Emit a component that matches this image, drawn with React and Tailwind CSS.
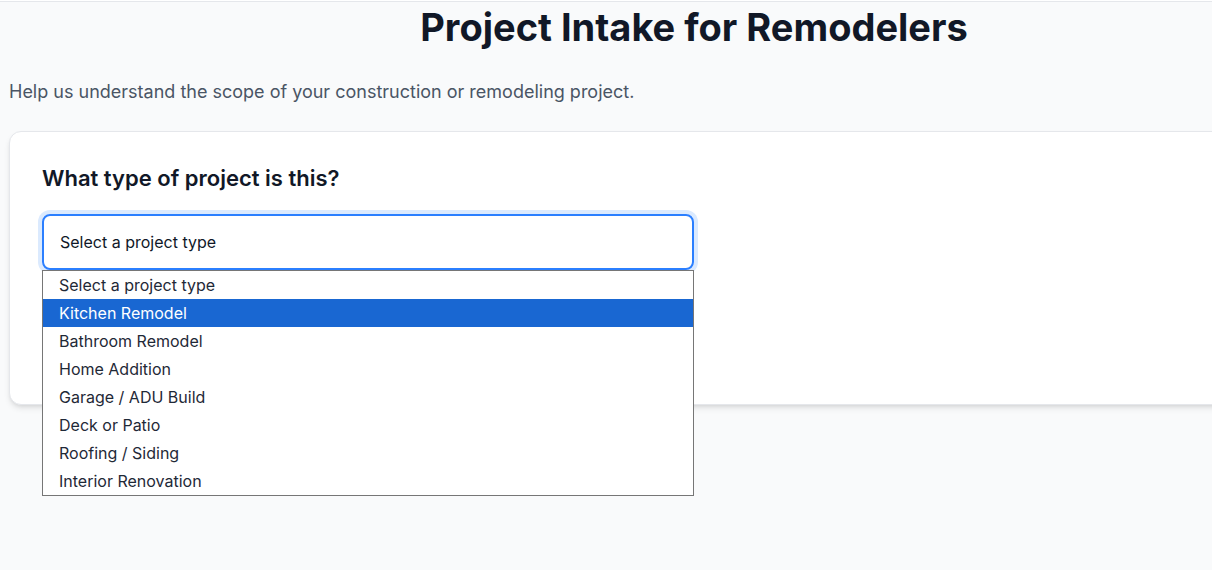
import { useState } from "react";

const projectTypes = [
	"Select a project type",
	"Kitchen Remodel",
	"Bathroom Remodel",
	"Home Addition",
	"Garage / ADU Build",
	"Deck or Patio",
	"Roofing / Siding",
	"Interior Renovation",
];

const App = () => {
	const [highlighted, setHighlighted] = useState(1);

	return (
		<div
			className="w-screen h-screen overflow-hidden bg-[#f9fafb] text-gray-900"
			style={{ fontFamily: "Inter, 'Noto Sans', sans-serif" }}
		>
			<div className="h-[2px] bg-white border-b border-gray-200"></div>
			<div className="w-[1388px] px-[9px]">
				<h1 className="pt-[5px] text-center text-[38px] leading-10 font-bold text-[#111827]">
					Project Intake for Remodelers
				</h1>
				<p className="mt-[31px] text-lg text-gray-600">
					Help us understand the scope of your construction or remodeling project.
				</p>
				<div className="mt-[25px] bg-white border border-gray-200 rounded-xl shadow-md px-8 pt-8 pb-8">
					<h2 className="text-[22px] leading-7 font-semibold text-[#111827]">
						What type of project is this?
					</h2>
					<div className="relative mt-[22px] w-[652px]">
						<div className="h-14 flex items-center pl-4 border-2 border-blue-500 rounded-lg ring-4 ring-blue-100 text-base text-gray-900">
							Select a project type
						</div>
						<ul className="absolute left-0 top-full z-10 w-full bg-white border border-[#767676] text-base text-[#1f2937]">
							{projectTypes.map((type, i) => (
								<li
									key={type}
									onMouseEnter={() => setHighlighted(i)}
									className={
										i === highlighted
											? "h-7 flex items-center pl-4 bg-[#1967d2] text-white"
											: "h-7 flex items-center pl-4"
									}
								>
									{type}
								</li>
							))}
						</ul>
					</div>
					<div className="h-[102px]"></div>
				</div>
			</div>
		</div>
	);
};

export default App;
